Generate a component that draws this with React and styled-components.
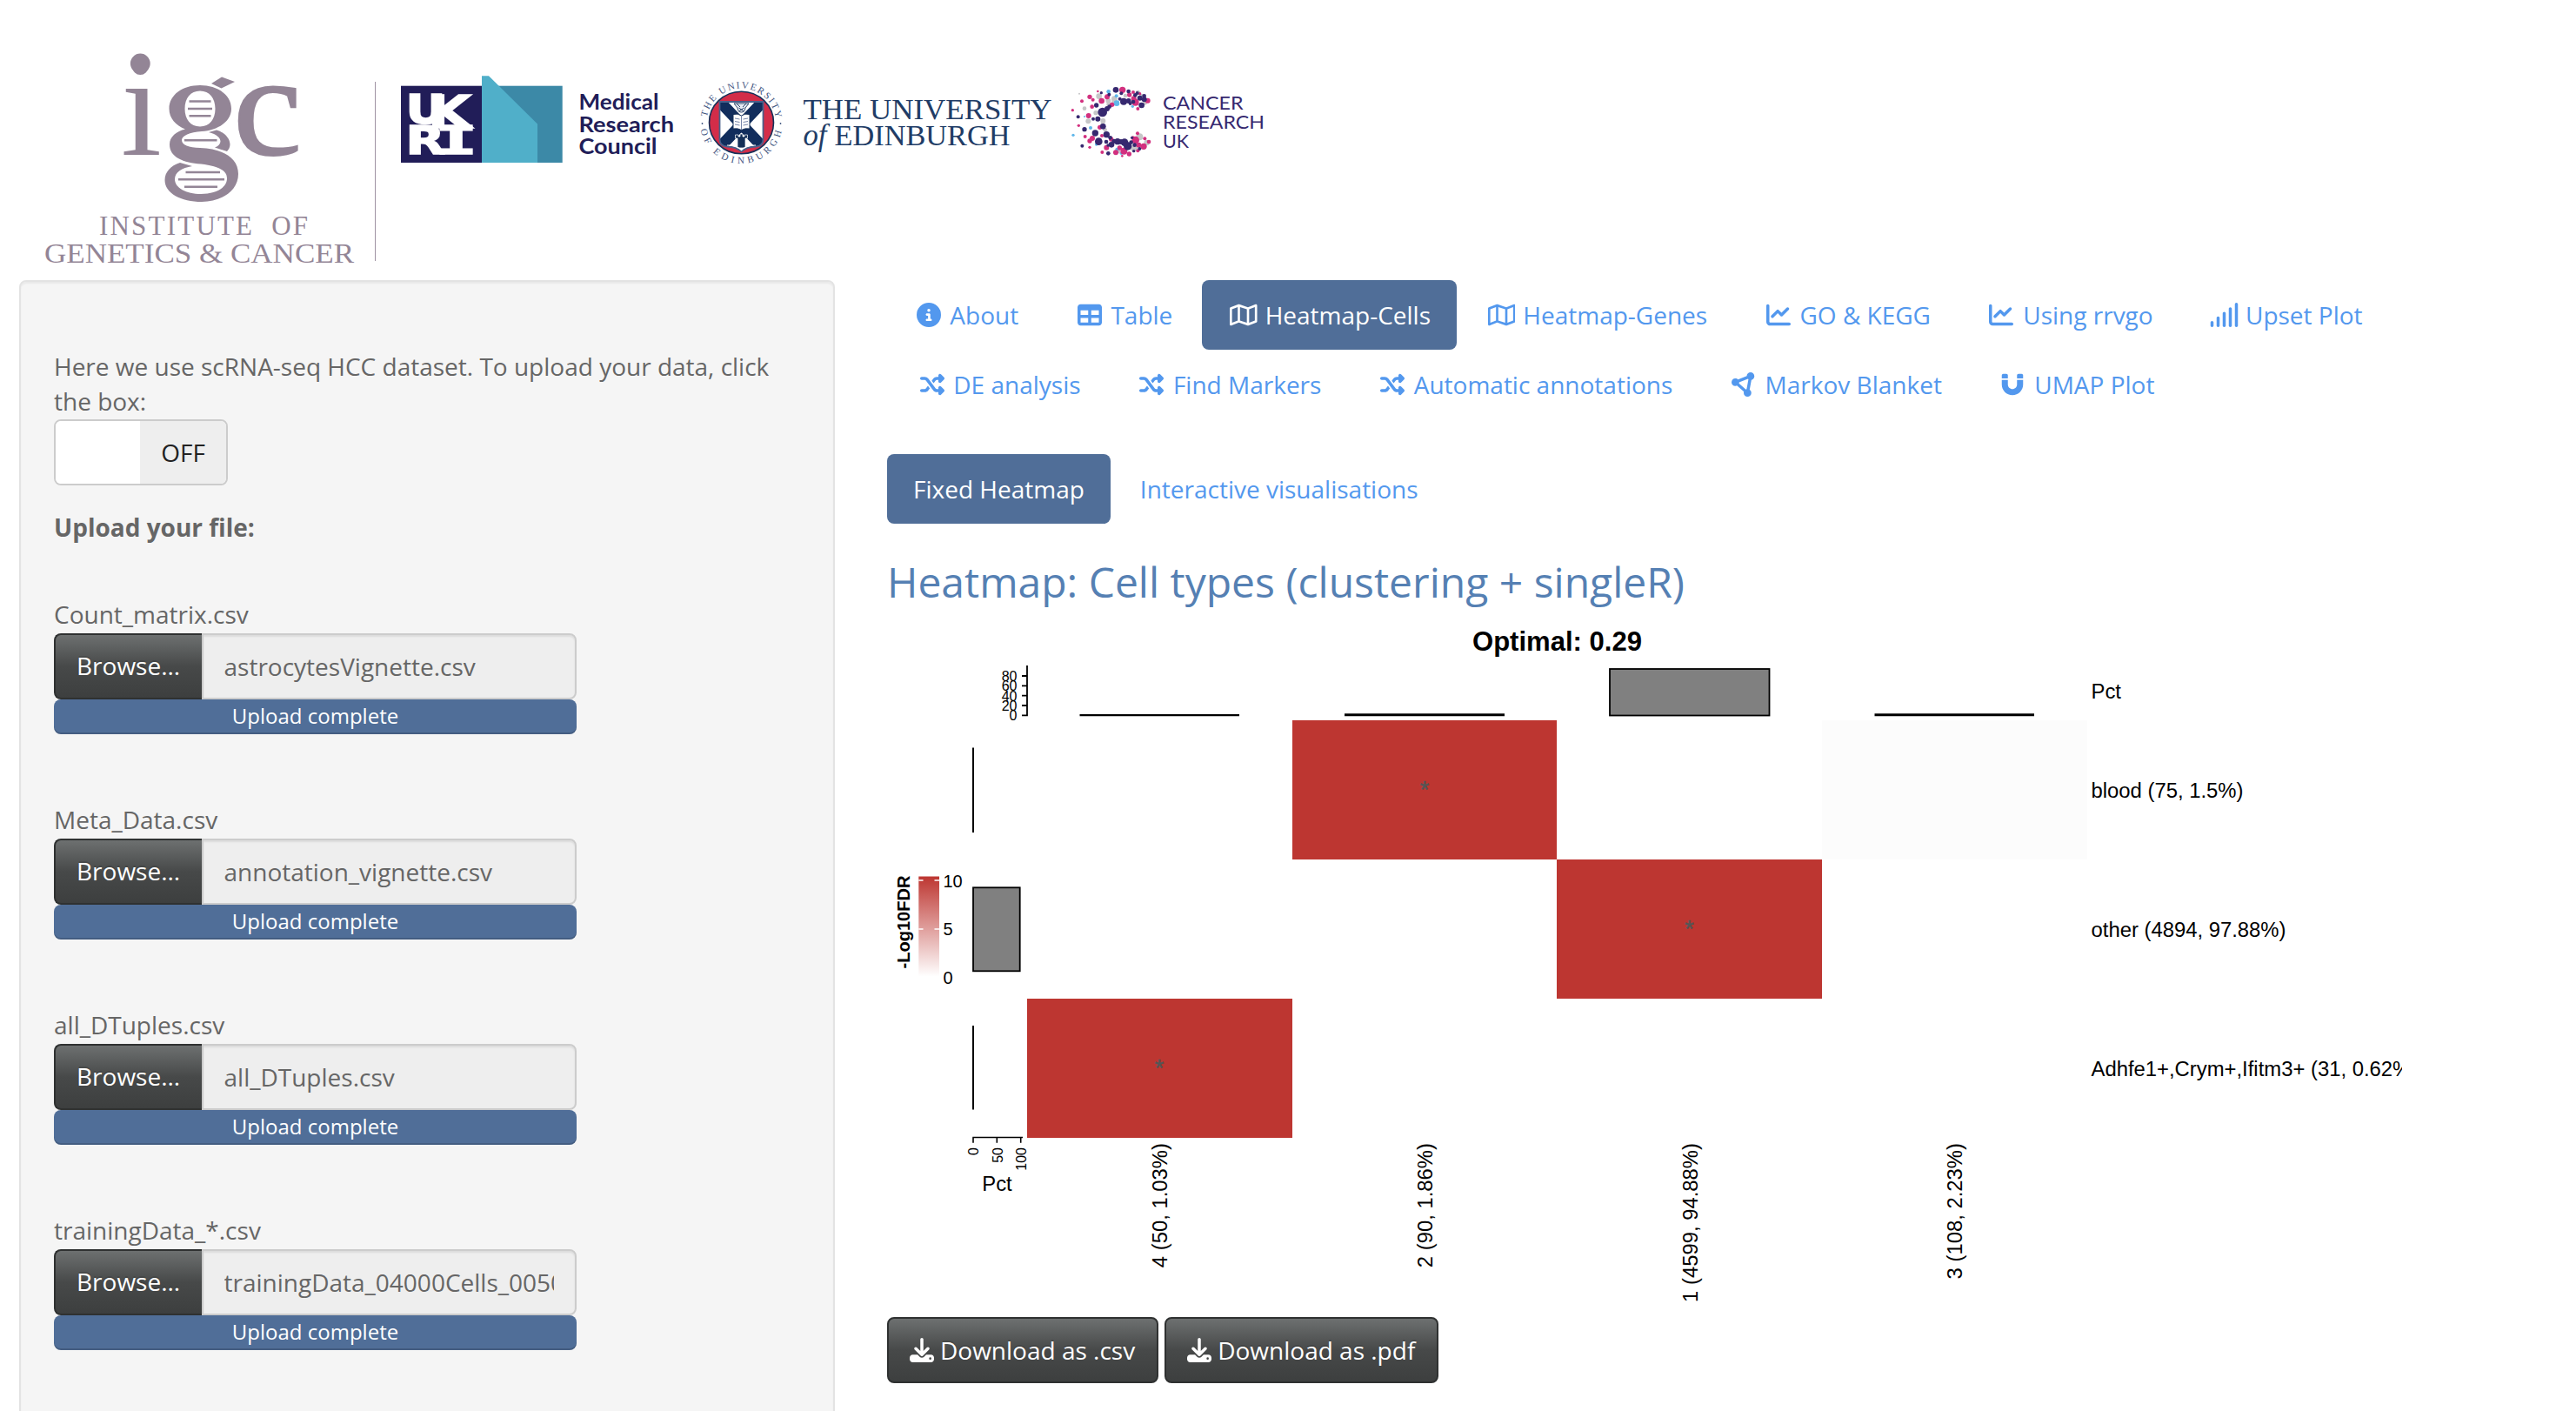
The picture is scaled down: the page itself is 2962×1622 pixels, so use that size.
import React from 'react';
import styled, { createGlobalStyle, css } from 'styled-components';
import {
  FaCircleInfo, FaTable, FaRegMap, FaChartLine, FaSignal,
  FaShuffle, FaCircleNodes, FaMagnet, FaDownload,
} from 'react-icons/fa6';

const Global = createGlobalStyle`
  *, *::before, *::after { box-sizing: border-box; }
  html, body { margin: 0; padding: 0; background: #fff; }
  body {
    font-family: "Open Sans", "Noto Sans", sans-serif;
    font-size: 28px;
    line-height: 40px;
    color: #666;
    overflow: hidden;
  }
`;

const Page = styled.div`
  width: 100%;
  height: 1622px;
  overflow: hidden;
`;

const Header = styled.header`
  display: flex;
  align-items: flex-start;
  height: 322px;
`;

const Logo = styled.svg`
  display: block;
  flex: none;
`;

const Main = styled.div`
  display: flex;
  align-items: flex-start;
  gap: 60px;
  padding-left: 22px;
`;

const Well = styled.aside`
  flex: none;
  width: 938px;
  height: 1400px;
  padding: 77px 38px 0;
  background: #f5f5f5;
  border: 2px solid #e3e3e3;
  border-radius: 8px;
  box-shadow: inset 0 2px 2px rgba(0, 0, 0, 0.05);
`;

const Intro = styled.p`
  margin: 0 0 1px;
`;

const Toggle = styled.div`
  display: flex;
  width: 200px;
  height: 76px;
  border: 2px solid #ccc;
  border-radius: 8px;
  overflow: hidden;
  background: #fff;
`;

const ToggleHandle = styled.span`
  width: 97px;
  background: #fff;
`;

const ToggleLabel = styled.span`
  flex: 1;
  display: flex;
  align-items: center;
  justify-content: center;
  background: #eee;
  color: #222;
`;

const UploadTitle = styled.div`
  margin: 28px 0 60px;
  font-weight: 700;
`;

const FileGroup = styled.div`
  width: 601px;
  height: 236px;
`;

const FileLabel = styled.label`
  display: block;
  height: 42px;
`;

const FileRow = styled.div`
  display: flex;
  height: 76px;
`;

const darkButton = css`
  color: #fff;
  border: 2px solid #2f3131;
  background: linear-gradient(#6d7070, #474949 50%, #3d3f3f);
  text-shadow: 0 -2px 0 rgba(0, 0, 0, 0.15);
  white-space: nowrap;
`;

const Browse = styled.span`
  ${darkButton}
  width: 170px;
  padding: 15px 0 0 24px;
  border-right: 0;
  border-radius: 8px 0 0 8px;
`;

const FileName = styled.div`
  flex: 1;
  min-width: 0;
  padding: 16px 24px 0 23.5px;
  background: #eee;
  border: 2px solid #ccc;
  border-radius: 0 8px 8px 0;
  box-shadow: inset 0 2px 2px rgba(0, 0, 0, 0.075);
`;

const Clip = styled.div`
  overflow: hidden;
  white-space: nowrap;
`;

const Progress = styled.div`
  height: 40px;
  border-radius: 8px;
  background: #506e98;
  box-shadow: inset 0 -2px 0 rgba(0, 0, 0, 0.15);
  color: #fff;
  font-size: 24px;
  line-height: 38px;
  text-align: center;
`;

const Content = styled.main`
  flex: none;
  width: 1742px;
`;

const Pills = styled.nav`
  display: flex;
  flex-wrap: wrap;
  margin-bottom: 40px;
`;

const Pill = styled.a`
  display: flex;
  align-items: center;
  height: 80px;
  padding: 0 30px;
  border-radius: 8px;
  white-space: nowrap;
  color: ${(p) => (p.$active ? '#fff' : '#5398ee')};
  background: ${(p) => (p.$active ? '#506e98' : 'transparent')};
  & + & { margin-left: 4px; }
`;

const IconSlot = styled.span`
  display: flex;
  justify-content: center;
  width: 35px;
  margin-right: 7.3px;
  svg { display: block; flex: none; height: 28px; width: ${(p) => p.$w}px; }
`;

const Title = styled.h3`
  margin: 0;
  font-size: 48px;
  line-height: 53px;
  font-weight: 400;
  color: #5580b3;
`;

const Plot = styled.svg`
  display: block;
  margin-top: 15px;
  font-family: "Liberation Sans", Arial, sans-serif;
`;

const Buttons = styled.div`
  display: flex;
  gap: 7px;
  margin-top: 4px;
`;

const Download = styled.button`
  ${darkButton}
  display: flex;
  align-items: center;
  gap: 7px;
  height: 76px;
  padding: 0 25px 0 24px;
  border-radius: 8px;
  font: inherit;
  svg { display: block; width: 28px; height: 28px; }
`;

const PURPLE = '#938596';
const NAVY = '#211d58';
const EDIN = '#153058';

function IgcLogo() {
  return (
    <Logo width="440" height="322" viewBox="0 0 440 322" fill={PURPLE} fontFamily='"Liberation Serif", "Times New Roman", serif'>
      <text x="139" y="178" fontSize="166" textLength="47" lengthAdjust="spacingAndGlyphs">i</text>
      <circle cx="161.300" cy="73" r="11.400" />
      <text x="268" y="177" fontSize="166" textLength="79" lengthAdjust="spacingAndGlyphs" stroke={PURPLE} strokeWidth="2">c</text>
      <path d="M243 96 L255 88.5 L270 94 L254.500 101.500 Z" />
      <path fillRule="evenodd" d="M230 98 C250 98 266 109 266 125 C266 140 250 150 232 151 C218 152 209 156 209 161 C209 167 217 169.500 230 170 C256 171 274 181 274 200 C274 219 255 232 232 232 C208 232 189.500 222 189.500 207 C189.500 198 196 190.500 207 187 L221 191 C209 193 201 198 201 206 C201 216 214 223 231 223 C248 223 261 216 261 205 C261 195 250 191 231 188.500 C211 187 195 181 195 166 C195 157 203 151 213 148.500 C202 144 194.500 136 194.500 125 C194.500 109 210 98 230 98 Z M230 104.500 C219 104.500 212.500 113 212.500 125 C212.500 137 219 145.500 230 145.500 C241 145.500 247.500 137 247.500 125 C247.500 113 241 104.500 230 104.500 Z" />
      <path d="M240 152 L249 149.500 C258 152 264.500 159 264.500 166 C264.500 169 263 172 261 174 L247 169.500 C257 166 256 156 240 152 Z" />
      <path d="M217.500 116.500H242.500M216 125H244M217.500 133.300H242.500M212 161.300H249.500M213.500 198H253M205 206.300H258M212 214.700H250" stroke={PURPLE} strokeWidth="2.500" />
      <text x="114" y="269.700" fontSize="31" textLength="240" lengthAdjust="spacing" xmlSpace="preserve">INSTITUTE&#160; OF</text>
      <text x="51" y="301.700" fontSize="31" textLength="356" lengthAdjust="spacingAndGlyphs">GENETICS &amp; CANCER</text>
      <path d="M431.500 94V300" stroke="#a093a3" strokeWidth="1" />
    </Logo>
  );
}

function UkriLogo() {
  return (
    <Logo width="350" height="322" viewBox="440 0 350 322">
      <rect x="461" y="98.700" width="93" height="88.300" fill={NAVY} />
      <rect x="554" y="98.700" width="92.700" height="88.300" fill="#3c89a7" />
      <path d="M554 87.300H562L618 142.500V187H554Z" fill="#50afc9" />
      <g fill="#fff" stroke="#fff" strokeWidth="1.600" fontWeight="700" fontFamily='"DejaVu Sans", sans-serif'>
        <text x="466.500" y="142" fontSize="46" textLength="46" lengthAdjust="spacingAndGlyphs">U</text>
        <text x="492" y="146.500" fontSize="52" textLength="50" lengthAdjust="spacingAndGlyphs">K</text>
        <text x="466.500" y="176.500" fontSize="45" textLength="45" lengthAdjust="spacingAndGlyphs">R</text>
        <text x="500" y="176.500" fontSize="45" textLength="49" lengthAdjust="spacingAndGlyphs" fontFamily='"DejaVu Sans Mono", monospace'>I</text>
      </g>
      <g fill={NAVY} fontFamily="Lato, sans-serif" fontWeight="700" fontSize="25">
        <text x="665.500" y="126" textLength="92" lengthAdjust="spacingAndGlyphs">Medical</text>
        <text x="665.500" y="151.500" textLength="109.500" lengthAdjust="spacingAndGlyphs">Research</text>
        <text x="665.500" y="177" textLength="90" lengthAdjust="spacingAndGlyphs">Council</text>
      </g>
    </Logo>
  );
}

function EdinburghLogo() {
  return (
    <Logo width="435" height="322" viewBox="790 0 435 322" fontFamily='"Liberation Serif", "Times New Roman", serif'>
      <defs>
        <path id="ringTop" d="M812.300 141 A40 39.500 0 0 1 892.300 141" />
        <path id="ringBottom" d="M805 141 A47.300 47 0 0 0 899.600 141" />
        <clipPath id="shield">
          <path d="M827.500 117H877.500V160Q877.500 168 869 168.500Q858 169 852.500 174Q847 169 836 168.500Q827.500 168 827.500 160Z" />
        </clipPath>
      </defs>
      <ellipse cx="852.500" cy="141" rx="37" ry="35.800" fill="#d32d49" stroke={EDIN} strokeWidth="1.600" />
      <g clipPath="url(#shield)">
        <rect x="826" y="115" width="54" height="60" fill="#fff" />
        <path d="M826 115L879 171M879 115L826 171" stroke="#112d5c" strokeWidth="13" />
      </g>
      <path d="M827.500 117H877.500V160Q877.500 168 869 168.500Q858 169 852.500 174Q847 169 836 168.500Q827.500 168 827.500 160Z" fill="none" stroke="#49608a" strokeWidth="1.800" />
      <path d="M843 131.500Q848.500 130 852.500 133Q856.500 130 862 131.500V148Q856.500 147 852.500 149.500Q848.500 147 843 148Z" fill="#fff" stroke={EDIN} strokeWidth="1" />
      <path d="M852.500 133V149M845 136L850.500 137M845 139.500L850.500 140.500M845 143L850.500 144M854.500 137L860 136M854.500 140.500L860 139.500M854.500 144L860 143" stroke="#6a7ba0" strokeWidth="0.900" />
      <path d="M844 119H861L857 124Q856.500 129 852.500 129Q848.500 129 848 124Z" fill="#e8ecf4" stroke={EDIN} strokeWidth="0.900" />
      <path d="M849.500 124L855.500 128M855.500 124L849.500 128M847 119L851 123M858 119L854 123" stroke={EDIN} strokeWidth="0.900" />
      <path d="M845.500 155V159H848V170H857V159H859.500V155H856V157H854V154H851V157H849V155Z" fill={EDIN} stroke="#fff" strokeWidth="0.700" />
      <path d="M836 167Q848 167 852.500 172.500Q857 167 869 167" fill="none" stroke="#fff" strokeWidth="1.200" />
      <g fill="#3f557f" fontSize="11">
        <text><textPath href="#ringTop" startOffset="6.500" textLength="113">THE UNIVERSITY</textPath></text>
        <text><textPath href="#ringBottom" startOffset="8" textLength="130">OF EDINBURGH</textPath></text>
        <circle cx="807.500" cy="142" r="0.900" />
        <circle cx="897.500" cy="142" r="0.900" />
      </g>
      <g fill="#213c66">
        <text x="923.500" y="136.500" fontSize="33.500" textLength="286" lengthAdjust="spacingAndGlyphs">THE UNIVERSITY</text>
        <text x="923.500" y="166.500" fontSize="35" fontStyle="italic" textLength="27" lengthAdjust="spacingAndGlyphs">of</text>
        <text x="959.500" y="166.500" fontSize="33.500" textLength="202" lengthAdjust="spacingAndGlyphs">EDINBURGH</text>
      </g>
    </Logo>
  );
}

const N = '#36286f';
const P = '#d2307f';
const G = '#c6c6c8';
const B = '#5fb7ea';
const DOTS = [
  [48, 38, 3, G], [116, 47, 10, G], [66, 89, 7, G], [79, 133, 9, G], [105, 104, 8, G], [130, 132, 9, G], [148, 62, 9, G],
  [150, 75, 8, G], [169, 56, 10, G], [207, 45, 7, G], [250, 34, 8, G], [275, 70, 7, G], [137, 163, 7, G], [256, 187, 12, G],
  [281, 207, 10, G], [237, 226, 12, G], [184, 238, 6, G], [264, 48, 9, G], [128, 145, 7, G], [165, 68, 6, G],
  [149, 31, 7, B], [176, 46, 6, B], [177, 71, 10, B], [232, 82, 5, B], [66, 117, 3, B], [87, 156, 6, B], [27, 181, 5, B],
  [178, 230, 6, B], [107, 213, 5, B], [193, 244, 5, B],
  [112, 30, 4, P], [84, 49, 8, P], [57, 64, 6, P], [95, 59, 6, P], [125, 63, 10, P], [144, 49, 9, P], [92, 83, 7, P],
  [25, 95, 5, P], [80, 114, 9, P], [46, 148, 5, P], [68, 186, 6, P], [84, 201, 8, P], [93, 192, 9, P], [84, 223, 5, P],
  [127, 240, 6, P], [142, 224, 9, P], [197, 25, 11, P], [161, 76, 8, P], [221, 42, 8, P], [242, 68, 12, P], [234, 33, 6, P],
  [284, 62, 9, P], [250, 90, 6, P], [236, 55, 9, P], [119, 154, 8, P], [126, 183, 6, P], [187, 225, 8, P], [174, 241, 9, P],
  [202, 236, 12, P], [220, 246, 8, P], [196, 253, 4, P], [242, 198, 13, P], [249, 175, 6, P], [274, 193, 6, P],
  [288, 204, 7, P], [270, 220, 11, P], [253, 215, 9, P], [250, 235, 6, P], [158, 195, 8, P], [233, 190, 6, P], [257, 38, 5, P],
  [124, 35, 5, N], [151, 41, 6, N], [107, 78, 8, N], [44, 118, 6, N], [128, 102, 16, N], [144, 90, 9, N], [152, 83, 7, N],
  [96, 125, 6, N], [112, 125, 9, N], [66, 161, 8, N], [130, 151, 10, N], [103, 174, 11, N], [58, 218, 6, N], [115, 203, 13, N],
  [142, 179, 11, N], [141, 204, 7, N], [148, 244, 7, N], [174, 25, 10, N], [193, 37, 6, N], [201, 65, 12, N], [188, 56, 6, N],
  [218, 30, 7, N], [218, 63, 9, N], [241, 43, 7, N], [257, 53, 9, N], [272, 58, 9, N], [248, 36, 6, N], [263, 78, 10, N],
  [234, 66, 7, N], [224, 72, 6, N], [272, 46, 7, N], [155, 190, 7, N], [159, 214, 10, N], [147, 216, 5, N], [180, 203, 11, N], [204, 206, 13, N],
  [215, 219, 14, N], [192, 204, 9, N], [227, 206, 7, N], [168, 202, 8, N], [239, 215, 7, N], [236, 236, 5, N], [256, 228, 6, N], [230, 190, 5, N],
];

function CruLogo() {
  return (
    <Logo width="240" height="322" viewBox="1225 0 240 322">
      <g transform="translate(1225 95) scale(0.3333)">
        {DOTS.map(([x, y, r, c], i) => <circle key={i} cx={x} cy={y} r={r} fill={c} />)}
      </g>
      <g fill={N} fontFamily="Lato, sans-serif" fontSize="21.500">
        <text x="1337" y="126" textLength="92.500" lengthAdjust="spacingAndGlyphs">CANCER</text>
        <text x="1337" y="148" textLength="117" lengthAdjust="spacingAndGlyphs">RESEARCH</text>
        <text x="1337" y="170" textLength="30" lengthAdjust="spacingAndGlyphs">UK</text>
      </g>
    </Logo>
  );
}

const FILES = [
  ['Count_matrix.csv', 'astrocytesVignette.csv'],
  ['Meta_Data.csv', 'annotation_vignette.csv'],
  ['all_DTuples.csv', 'all_DTuples.csv'],
  ['trainingData_*.csv', 'trainingData_04000Cells_00500.csv'],
];

const TABS = [
  { Icon: FaCircleInfo, label: 'About' },
  { Icon: FaTable, label: 'Table' },
  { Icon: FaRegMap, w: 31.5, label: 'Heatmap-Cells', active: true },
  { Icon: FaRegMap, w: 31.5, label: 'Heatmap-Genes' },
  { Icon: FaChartLine, label: 'GO & KEGG' },
  { Icon: FaChartLine, label: 'Using rrvgo' },
  { Icon: FaSignal, w: 35, label: 'Upset Plot' },
  { Icon: FaShuffle, label: 'DE analysis' },
  { Icon: FaShuffle, label: 'Find Markers' },
  { Icon: FaShuffle, label: 'Automatic annotations' },
  { Icon: FaCircleNodes, label: 'Markov Blanket' },
  { Icon: FaMagnet, label: 'UMAP Plot' },
];

const COL = 304.75;
const COLUMNS = ['4 (50, 1.03%)', '2 (90, 1.86%)', '1 (4599, 94.88%)', '3 (108, 2.23%)'];
const ROWS = ['blood (75, 1.5%)', 'other (4894, 97.88%)', 'Adhfe1+,Crym+,Ifitm3+ (31, 0.62%)'];
const RED = '#bd3631';

function Heatmap() {
  return (
    <Plot width="1742" height="800" viewBox="1020 710 1742 800">
      <defs>
        <linearGradient id="scale" x1="0" y1="0" x2="0" y2="1">
          <stop offset="0" stopColor={RED} />
          <stop offset="1" stopColor="#fff" />
        </linearGradient>
      </defs>
      <text x="1790.500" y="748" fontSize="31" fontWeight="700" textAnchor="middle" textLength="195" lengthAdjust="spacingAndGlyphs">Optimal: 0.29</text>

      <g shapeRendering="crispEdges">
        <rect x="1486" y="828" width="304" height="160" fill={RED} />
        <rect x="1790" y="988" width="305" height="160" fill={RED} />
        <rect x="1181" y="1148" width="305" height="160" fill={RED} />
        <rect x="2095" y="828" width="305" height="160" fill="#fcfcfc" />
      </g>
      <g fontSize="27" fill="#555" textAnchor="middle" stroke="#555" strokeWidth="0.500">
        <text x="1638" y="916.500">*</text>
        <text x="1942.500" y="1076.500">*</text>
        <text x="1333" y="1236.500">*</text>
      </g>

      <g stroke="#000" strokeWidth="2" fill="none">
        <path d="M1181 765V823.300M1175 777H1181M1175 788.300H1181M1175 799.700H1181M1175 811H1181M1175 822.300H1181" strokeWidth="1.800" />
        <path d="M1241.500 822.200H1425" strokeWidth="2.200" />
        <path d="M1546 821.800H1730" strokeWidth="3" />
        <path d="M2155.500 821.700H2339" strokeWidth="3" />
        <rect x="1851" y="769" width="183.500" height="53.500" fill="#808080" strokeWidth="1.800" />
        <path d="M1119 859.500V957M1119 1179V1275.500" />
        <rect x="1119" y="1020.300" width="53.700" height="96" fill="#808080" strokeWidth="1.800" />
        <path d="M1118.300 1307.500H1176M1119 1307.500V1313.700M1146.300 1307.500V1313.700M1173.700 1307.500V1313.700" strokeWidth="1.600" />
      </g>
      <g fontSize="16" textAnchor="end">
        {[80, 60, 40, 20, 0].map((v, i) => (
          <text key={v} x="1169.500" y={782.7 + i * 11.4}>{v}</text>
        ))}
        {[0, 50, 100].map((v, i) => (
          <text key={v} transform={`translate(${1125 + i * 27.6} 1319) rotate(-90)`}>{v}</text>
        ))}
      </g>

      <rect x="1056.300" y="1007.500" width="23.700" height="115" fill="url(#scale)" />
      <path d="M1056.300 1012H1061.500M1074.500 1012H1080M1056.300 1068H1061.500M1074.500 1068H1080" stroke="#fff" strokeWidth="1.600" />
      <g fontSize="20">
        <text x="1084.500" y="1020.300">10</text>
        <text x="1084.500" y="1075">5</text>
        <text x="1084.500" y="1131">0</text>
        <text transform="translate(1046 1113.500) rotate(-90)" fontWeight="700" textLength="107" lengthAdjust="spacingAndGlyphs">-Log10FDR</text>
      </g>

      <g fontSize="23.850">
        <text x="1146.500" y="1369" textAnchor="middle">Pct</text>
        <text x="2404.500" y="803">Pct</text>
        {ROWS.map((r, i) => <text key={r} x="2404.500" y={917 + i * 160}>{r}</text>)}
        {COLUMNS.map((c, i) => (
          <text key={c} transform={`translate(${1342 + i * COL} 1314) rotate(-90)`} textAnchor="end">{c}</text>
        ))}
      </g>
    </Plot>
  );
}

export default function App() {
  return (
    <Page>
      <Global />
      <Header>
        <IgcLogo />
        <UkriLogo />
        <EdinburghLogo />
        <CruLogo />
      </Header>
      <Main>
        <Well>
          <Intro>Here we use scRNA-seq HCC dataset. To upload your data, click the box:</Intro>
          <Toggle>
            <ToggleHandle />
            <ToggleLabel>OFF</ToggleLabel>
          </Toggle>
          <UploadTitle>Upload your file:</UploadTitle>
          {FILES.map(([label, file]) => (
            <FileGroup key={label}>
              <FileLabel>{label}</FileLabel>
              <FileRow>
                <Browse>Browse...</Browse>
                <FileName><Clip>{file}</Clip></FileName>
              </FileRow>
              <Progress>Upload complete</Progress>
            </FileGroup>
          ))}
        </Well>
        <Content>
          <Pills>
            {TABS.map(({ Icon, label, active, w = 28 }) => (
              <Pill key={label} $active={active}>
                <IconSlot $w={w}><Icon /></IconSlot>
                {label}
              </Pill>
            ))}
          </Pills>
          <Pills>
            <Pill $active>Fixed Heatmap</Pill>
            <Pill>Interactive visualisations</Pill>
          </Pills>
          <Title>Heatmap: Cell types (clustering + singleR)</Title>
          <Heatmap />
          <Buttons>
            <Download><FaDownload />Download as .csv</Download>
            <Download><FaDownload />Download as .pdf</Download>
          </Buttons>
        </Content>
      </Main>
    </Page>
  );
}
